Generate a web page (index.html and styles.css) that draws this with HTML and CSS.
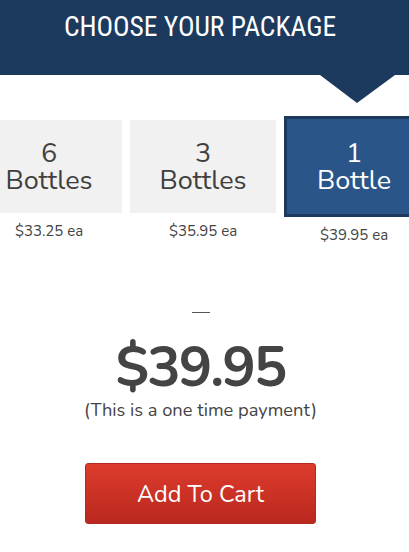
FILE: index.html
```html
<!DOCTYPE html>
<html lang="en">
<head>
<meta charset="utf-8">
<title>Choose Your Package</title>
<link rel="stylesheet" href="styles.css">
</head>
<body>
<header class="banner">
  <h1 class="banner-title">CHOOSE YOUR PACKAGE</h1>
</header>
<section class="packages">
  <div class="package">
    <div class="package-box">
      <span class="package-qty">6</span>
      <span class="package-unit">Bottles</span>
    </div>
    <div class="package-price">$33.25 ea</div>
  </div>
  <div class="package">
    <div class="package-box">
      <span class="package-qty">3</span>
      <span class="package-unit">Bottles</span>
    </div>
    <div class="package-price">$35.95 ea</div>
  </div>
  <div class="package package-selected">
    <div class="package-box">
      <span class="package-qty">1</span>
      <span class="package-unit">Bottle</span>
    </div>
    <div class="package-price">$39.95 ea</div>
  </div>
</section>
<section class="summary">
  <div class="summary-dash"></div>
  <div class="summary-total">$39.95</div>
  <div class="summary-note">(This is a one time payment)</div>
  <button class="cart-button" type="button">Add To Cart</button>
</section>
</body>
</html>
```

FILE: styles.css
```css
html, body {
  margin: 0;
  padding: 0;
  background: #ffffff;
}
body {
  width: 409px;
  overflow: hidden;
  font-family: "Nunito", "Lato", "Noto Sans", sans-serif;
  color: #444444;
}
.banner {
  position: relative;
  height: 75px;
  background: #1b3a5e;
  display: flex;
  justify-content: center;
  padding-right: 9px;
}
.banner::after {
  content: "";
  position: absolute;
  left: 320px;
  top: 75px;
  width: 0;
  height: 0;
  border-left: 37px solid transparent;
  border-right: 38px solid transparent;
  border-top: 28px solid #1b3a5e;
}
.banner-title {
  margin: 0;
  padding-top: 11px;
  font-family: "Roboto Condensed", "Liberation Sans Narrow", "Roboto", sans-serif;
  font-weight: 400;
  font-size: 27.5px;
  line-height: 32px;
  color: #ffffff;
}
.packages {
  display: flex;
  gap: 8px;
  margin-top: 45px;
  margin-left: -24px;
}
.package {
  flex: 0 0 146px;
  display: flex;
  flex-direction: column;
  align-items: center;
}
.package-box {
  box-sizing: border-box;
  width: 146px;
  height: 93px;
  background: #f1f1f1;
  display: flex;
  flex-direction: column;
  align-items: center;
  justify-content: center;
  color: #3f3f3f;
  font-size: 27px;
  line-height: 27px;
}
.package-selected .package-box {
  height: 101px;
  margin-top: -4px;
  padding-right: 6px;
  background: #2a5589;
  border: 3px solid #1b3a5e;
  color: #ffffff;
}
.package-price {
  margin-top: 8px;
  font-size: 15px;
  line-height: 20px;
  color: #444444;
}
.package-selected .package-price {
  padding-right: 6px;
}
.summary {
  display: flex;
  flex-direction: column;
  align-items: center;
  padding-right: 8px;
}
.summary-dash {
  width: 18px;
  height: 1px;
  background: #555555;
  margin-top: 67px;
}
.summary-total {
  margin-top: 24px;
  font-size: 56px;
  font-weight: 700;
  line-height: 62px;
  letter-spacing: -2px;
  color: #444444;
}
.summary-note {
  font-size: 18.3px;
  line-height: 22px;
  color: #444444;
}
.cart-button {
  margin-top: 42px;
  width: 231px;
  height: 61px;
  border: 1px solid #b32a20;
  border-radius: 3px;
  background: linear-gradient(#dd3c2c, #b9281f);
  color: #ffffff;
  font-family: inherit;
  font-size: 23.5px;
  cursor: pointer;
}
```
